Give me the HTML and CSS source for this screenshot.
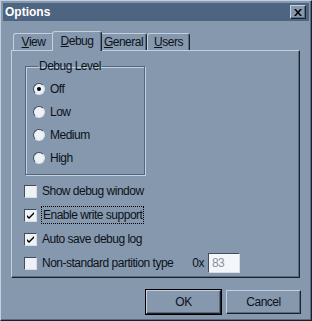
FILE: index.html
```html
<!DOCTYPE html>
<html lang="en">
<head>
    <meta charset="UTF-8">
    <title>Options</title>
    <link rel="stylesheet" href="styles.css">
</head>
<body>
    <div class="window">
        <div class="titlebar">
            <span class="title">Options</span>
            <button class="close" aria-label="Close">
                <svg width="8" height="7" viewBox="0 0 8 7"><path d="M0 0h2l2 2.5 2-2.5h2l-3 3.5 3 3.5h-2l-2-2.5-2 2.5h-2l3-3.5z" fill="#000"/></svg>
            </button>
        </div>

        <div class="tabs">
            <div class="tab tab-view"><u>V</u>iew</div>
            <div class="tab tab-debug active"><u>D</u>ebug</div>
            <div class="tab tab-general"><u>G</u>eneral</div>
            <div class="tab tab-users"><u>U</u>sers</div>
        </div>

        <div class="panel">
            <fieldset class="group">
                <legend>Debug Level</legend>
                <label class="radio"><span class="dot checked"></span>Off</label>
                <label class="radio"><span class="dot"></span>Low</label>
                <label class="radio"><span class="dot"></span>Medium</label>
                <label class="radio"><span class="dot"></span>High</label>
            </fieldset>

            <label class="check"><span class="box"></span>Show debug window</label>
            <label class="check"><span class="box"><svg width="9" height="9" viewBox="0 0 9 9"><path d="M1 4l2 2 5-5v2l-5 5-2-2z" fill="#000"/></svg></span><span class="focus">Enable write support</span></label>
            <label class="check"><span class="box"><svg width="9" height="9" viewBox="0 0 9 9"><path d="M1 4l2 2 5-5v2l-5 5-2-2z" fill="#000"/></svg></span>Auto save debug log</label>
            <div class="check-row">
                <label class="check"><span class="box"></span>Non-standard partition type</label>
                <span class="hex">0x</span>
                <input class="hex-input" type="text" value="83" disabled>
            </div>
        </div>

        <div class="buttons">
            <button class="btn default">OK</button>
            <button class="btn">Cancel</button>
        </div>
    </div>
</body>
</html>
```

FILE: styles.css
```css
/* Ventana estilo clasico */
body {
    margin: 0;
    background-color: #8598ad;
    font-family: 'Liberation Sans', Arial, sans-serif;
    font-size: 12px;
    letter-spacing: -0.5px;
    color: #0c121a;
}

.window {
    width: 312px;
    height: 321px;
    box-sizing: border-box;
    padding: 2px;
    background-color: #8598ad;
    border-top: 1px solid #c3d0de;
    border-left: 1px solid #c3d0de;
    border-right: 1px solid #18212c;
    border-bottom: 1px solid #18212c;
    box-shadow: inset -1px -1px 0 #5b6b7e;
}

.titlebar {
    height: 18px;
    background-color: #4e6581;
    display: flex;
    align-items: center;
    justify-content: space-between;
    padding: 0 3px 0 2px;
}

.title {
    color: #fff;
    font-weight: bold;
    letter-spacing: 0;
}

.close {
    width: 16px;
    height: 14px;
    padding: 0;
    display: flex;
    align-items: center;
    justify-content: center;
    background-color: #8598ad;
    border: 1px solid;
    border-color: #c3d0de #18212c #18212c #c3d0de;
    box-shadow: inset -1px -1px 0 #5b6b7e;
}

/* Pestañas */
.tabs {
    display: flex;
    align-items: flex-end;
    margin-top: 9px;
    padding-left: 10px;
    height: 20px;
}

.tab {
    height: 17px;
    line-height: 17px;
    box-sizing: border-box;
    text-align: center;
    white-space: nowrap;
    border-top: 1px solid #c3d0de;
    border-left: 1px solid #c3d0de;
    border-right: 1px solid #18212c;
    border-radius: 3px 3px 0 0;
    box-shadow: inset -1px 0 0 #5b6b7e;
}

.tab-view { width: 41px; }
.tab-debug { width: 50px; }
.tab-general { width: 47px; }
.tab-users { width: 43px; }

.tab.active {
    height: 20px;
    line-height: 18px;
    margin: 0 -2px -1px -2px;
    background-color: #8598ad;
    position: relative;
    z-index: 1;
}

.panel {
    margin-left: 8px;
    width: 289px;
    height: 228px;
    box-sizing: border-box;
    padding: 8px 12px 0 12px;
    border-top: 1px solid #c3d0de;
    border-left: 1px solid #c3d0de;
    border-right: 1px solid #18212c;
    border-bottom: 1px solid #18212c;
    box-shadow: inset -1px -1px 0 #5b6b7e;
}

/* Grupo de radio */
.group {
    width: 120px;
    box-sizing: border-box;
    margin: 0 0 0 1px;
    padding: 4px 0 5px 7px;
    border: 1px solid #55667a;
    box-shadow: inset 1px 1px 0 #c3d0de, 1px 1px 0 #c3d0de;
}

.group legend {
    padding: 0 1px;
    margin-left: 5px;
}

.radio {
    display: flex;
    align-items: center;
    gap: 5px;
    height: 23px;
}

.dot {
    width: 12px;
    height: 12px;
    box-sizing: border-box;
    border-radius: 50%;
    background-color: #eef2f6;
    border: 1px solid;
    border-color: #3f4d5e #d4dee8 #d4dee8 #3f4d5e;
    display: flex;
    align-items: center;
    justify-content: center;
}

.dot.checked::after {
    content: '';
    width: 4px;
    height: 4px;
    border-radius: 50%;
    background-color: #000;
}

/* Casillas */
.check {
    display: flex;
    align-items: center;
    gap: 5px;
    height: 24px;
}

.group + .check {
    margin-top: 4px;
}

.box {
    width: 13px;
    height: 13px;
    box-sizing: border-box;
    background-color: #eef2f6;
    border: 1px solid;
    border-color: #3f4d5e #d4dee8 #d4dee8 #3f4d5e;
    display: flex;
    align-items: center;
    justify-content: center;
}

.focus {
    outline: 1px dotted #000;
    padding: 1px 1px;
}

.check-row {
    display: flex;
    align-items: center;
}

.hex {
    margin-left: 19px;
}

.hex-input {
    width: 32px;
    height: 20px;
    box-sizing: border-box;
    margin-left: 4px;
    padding: 0 3px;
    font-family: inherit;
    font-size: 12px;
    letter-spacing: -0.5px;
    color: #8592a2;
    background-color: #f4f6f9;
    border: 1px solid;
    border-color: #3f4d5e #d4dee8 #d4dee8 #3f4d5e;
}

/* Botones */
.buttons {
    display: flex;
    justify-content: flex-end;
    gap: 5px;
    margin-top: 12px;
    padding-right: 8px;
}

.btn {
    width: 75px;
    height: 24px;
    padding: 0;
    font-family: inherit;
    font-size: 12px;
    letter-spacing: -0.5px;
    color: #0c121a;
    background-color: #8598ad;
    border: 1px solid;
    border-color: #c3d0de #18212c #18212c #c3d0de;
    box-shadow: inset -1px -1px 0 #5b6b7e;
}

.btn.default {
    outline: 1px solid #000;
    outline-offset: 0;
}
```
